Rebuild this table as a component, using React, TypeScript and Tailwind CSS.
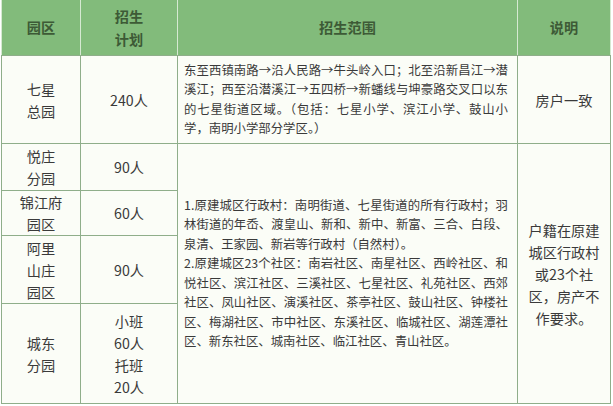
const cjk = "font-['Noto_Sans_CJK_SC','Noto_Sans',sans-serif]";

function Lines({ lines, last }: { lines: string[]; last?: number[] }) {
  return (
    <>
      {lines.map((l, i) => (
        <div
          key={i}
          className={`whitespace-nowrap ${last && last.includes(i) ? 'text-left' : 'text-justify [text-align-last:justify]'}`}
        >
          {l}
        </div>
      ))}
    </>
  );
}

function Cell({ children, className = '' }: { children: React.ReactNode; className?: string }) {
  return (
    <div className={`bg-[#fbfdf7] flex flex-col items-center justify-center text-center text-[14.2px] leading-[22px] text-[#3a3a3a] ${className}`}>
      {children}
    </div>
  );
}

const scope1 = [
  '东至西镇南路→沿人民路→牛头岭入口；北至沿新昌江→潜',
  '溪江；西至沿潜溪江→五四桥→新蟠线与坤豪路交叉口以东',
  '的七星街道区域。（包括：七星小学、滨江小学、鼓山小',
  '学，南明小学部分学区。）',
];

const scope2 = [
  '1.原建城区行政村：南明街道、七星街道的所有行政村；羽',
  '林街道的年岙、渡皇山、新和、新中、新富、三合、白段、',
  '泉清、王家园、新岩等行政村（自然村）。',
  '2.原建城区23个社区：南岩社区、南星社区、西岭社区、和',
  '悦社区、滨江社区、三溪社区、七星社区、礼苑社区、西郊',
  '社区、凤山社区、演溪社区、茶亭社区、鼓山社区、钟楼社',
  '区、梅湖社区、市中社区、东溪社区、临城社区、湖莲潭社',
  '区、新东社区、城南社区、临江社区、青山社区。',
];

export default function App() {
  return (
    <div lang="zh-CN" className={`w-[613px] h-[406px] bg-white pl-px ${cjk}`}>
      <div className="w-[610px]">
        {/* header */}
        <div className="grid grid-cols-[78px_96px_339px_92px] gap-x-px bg-[#d6e9d2] px-px h-[55px] text-[14.2px] leading-[23px] font-bold text-[#3d5a36]">
          <div className="bg-[#82bb7b] flex items-center justify-center">园区</div>
          <div className="bg-[#82bb7b] flex flex-col items-center justify-center">
            <span>招生</span>
            <span>计划</span>
          </div>
          <div className="bg-[#82bb7b] flex items-center justify-center">招生范围</div>
          <div className="bg-[#82bb7b] flex items-center justify-center">说明</div>
        </div>

        {/* body */}
        <div className="grid grid-cols-[78px_96px_339px_92px] grid-rows-[87px_46px_44px_67px_99px] gap-px bg-[#8fae8a] p-px">
          <Cell className="col-start-1 row-start-1">
            <span>七星</span>
            <span>总园</span>
          </Cell>
          <Cell className="col-start-2 row-start-1">240人</Cell>
          <div className="col-start-3 row-start-1 bg-[#fbfdf7] flex flex-col justify-center pl-[6px] pr-[9px] text-[12.4px] leading-[19.5px] text-[#3a3a3a]">
            <Lines lines={scope1} last={[3]} />
          </div>
          <Cell className="col-start-4 row-start-1">房户一致</Cell>

          <Cell className="col-start-1 row-start-2">
            <span>悦庄</span>
            <span>分园</span>
          </Cell>
          <Cell className="col-start-2 row-start-2">90人</Cell>

          <Cell className="col-start-1 row-start-3">
            <span>锦江府</span>
            <span>园区</span>
          </Cell>
          <Cell className="col-start-2 row-start-3">60人</Cell>

          <Cell className="col-start-1 row-start-4">
            <span>阿里</span>
            <span>山庄</span>
            <span>园区</span>
          </Cell>
          <Cell className="col-start-2 row-start-4">90人</Cell>

          <Cell className="col-start-1 row-start-5">
            <span>城东</span>
            <span>分园</span>
          </Cell>
          <Cell className="col-start-2 row-start-5">
            <span>小班</span>
            <span>60人</span>
            <span>托班</span>
            <span>20人</span>
          </Cell>

          <div className="col-start-3 row-start-2 row-span-4 bg-[#fbfdf7] flex flex-col justify-center pl-[6px] pr-[9px] text-[12.4px] leading-[19.5px] text-[#3a3a3a]">
            <Lines lines={scope2} last={[2, 7]} />
          </div>
          <Cell className="col-start-4 row-start-2 row-span-4">
            <span>户籍在原建</span>
            <span>城区行政村</span>
            <span>或23个社</span>
            <span>区，房产不</span>
            <span>作要求。</span>
          </Cell>
        </div>
      </div>
    </div>
  );
}
